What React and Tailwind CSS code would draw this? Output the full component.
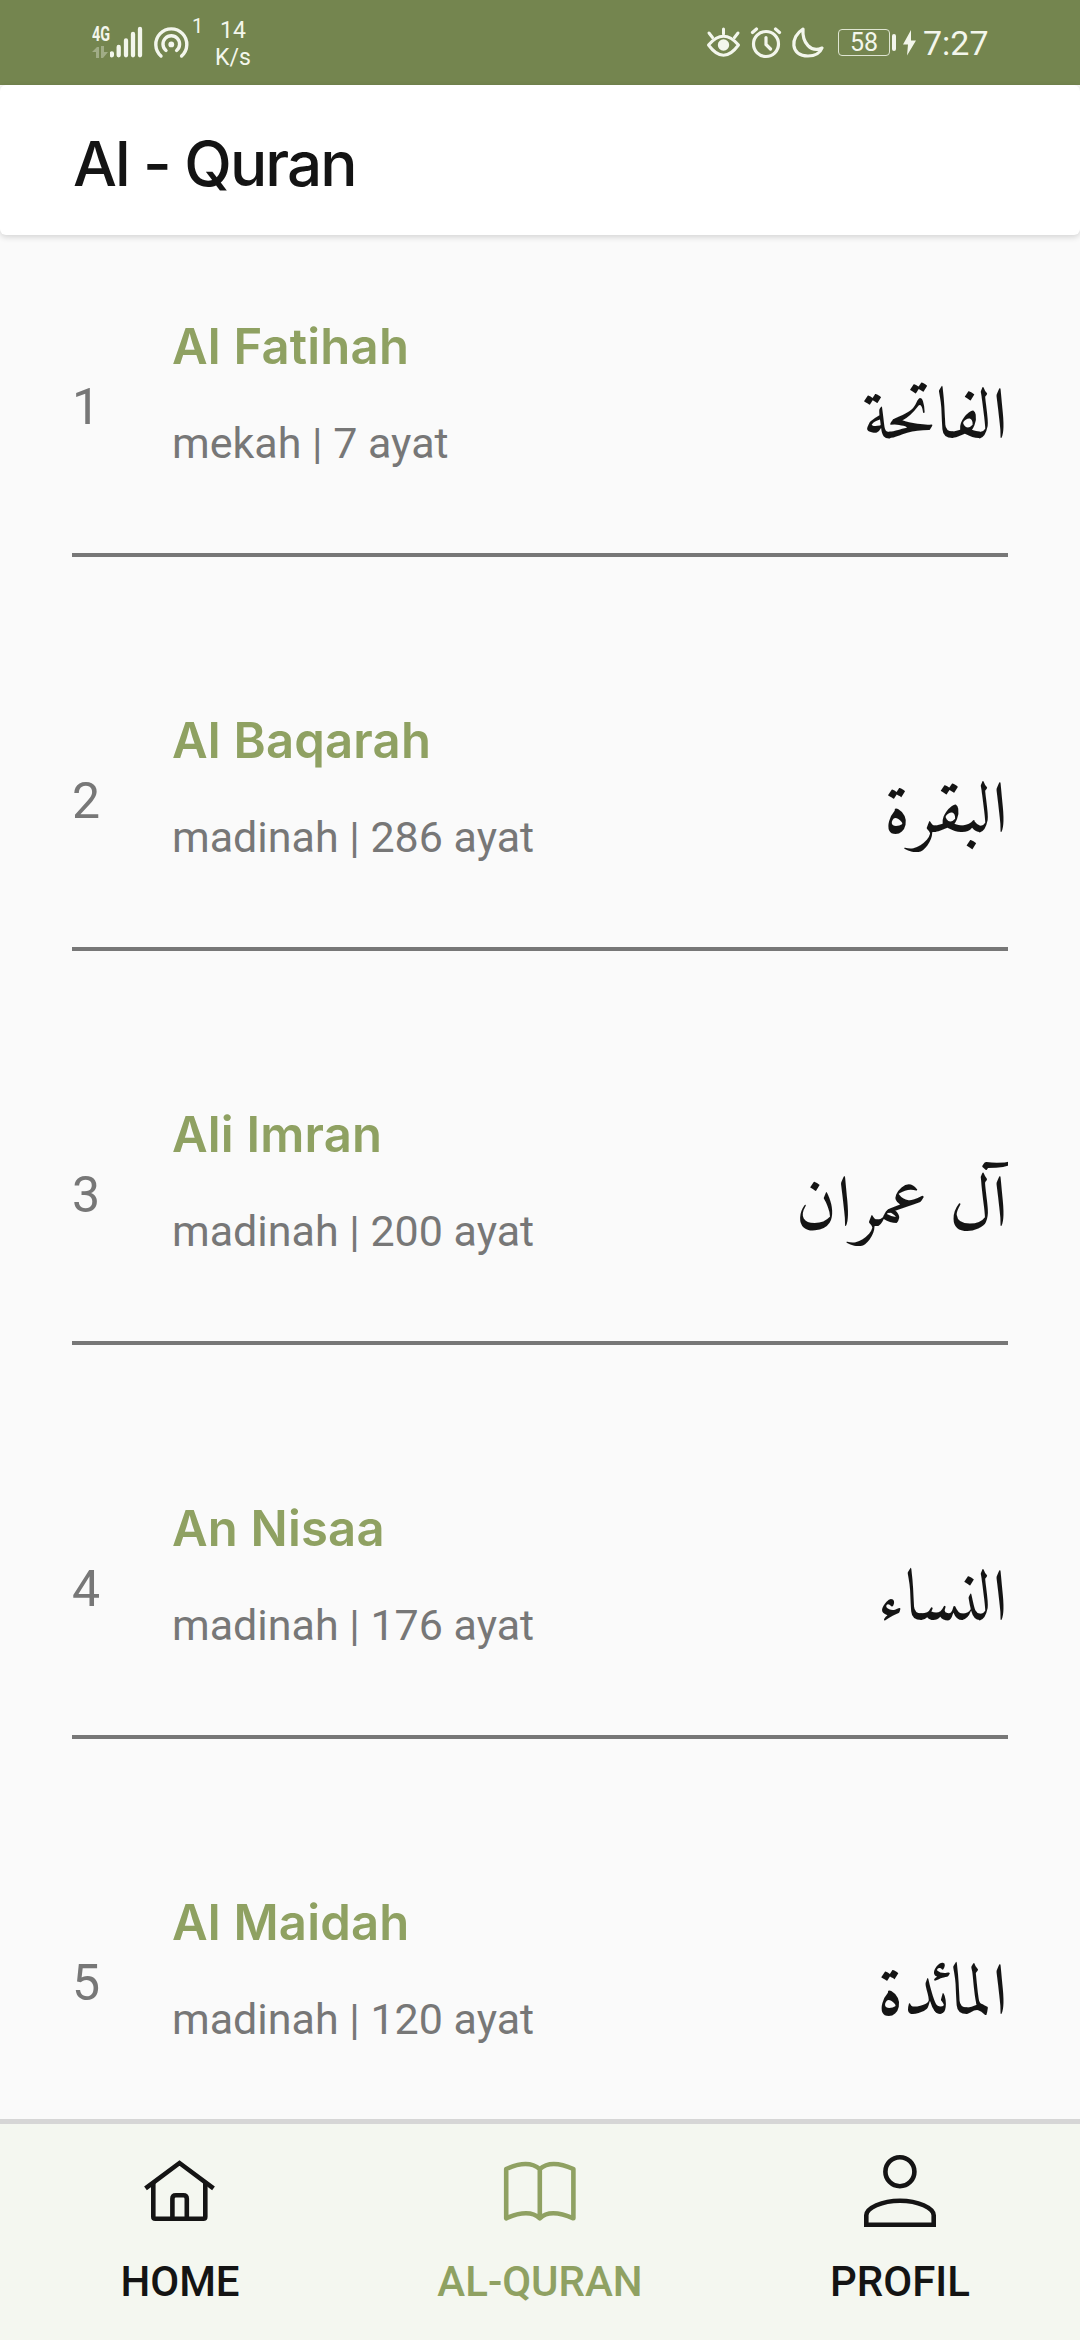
import React from "react";

const surahs = [
  { n: 1, name: "Al Fatihah", info: "mekah | 7 ayat", ar: "الفاتحة" },
  { n: 2, name: "Al Baqarah", info: "madinah | 286 ayat", ar: "البقرة" },
  { n: 3, name: "Ali Imran", info: "madinah | 200 ayat", ar: "آل عمران" },
  { n: 4, name: "An Nisaa", info: "madinah | 176 ayat", ar: "النساء" },
  { n: 5, name: "Al Maidah", info: "madinah | 120 ayat", ar: "المائدة" },
];

function StatusBar() {
  return (
    <div className="flex h-[85px] shrink-0 items-start bg-[#74854f] pl-[92px] text-[#f3f6ec]">
      <div className="flex w-[18px] flex-col pt-[24px]">
        <span className="w-[30px] origin-left scale-x-[0.72] text-[20px] font-bold leading-[20px]">4G</span>
        <svg className="mt-[2px] h-[12px] w-[16px] opacity-35" viewBox="0 0 16 12" fill="currentColor">
          <path d="M0 6 5 1h2v11H4V6zM9 0h3v6h4l-5 6H9z" />
        </svg>
      </div>
      <svg className="h-[85px] w-[34px]" viewBox="0 0 34 85" stroke="currentColor" strokeWidth="4.3" strokeLinecap="round">
        <path d="M1.9 53.5v1.8M8.7 47v8.3M16 40.5v14.8M23 34v21.3M30 29v26.3" />
      </svg>
      <svg className="ml-[9px] h-[85px] w-[36px]" viewBox="0 0 36 85" fill="none" stroke="currentColor" strokeWidth="3.4" strokeLinecap="round">
        <path d="M8 56A15.5 15.5 0 1 1 28.6 56M13 50.5A8.3 8.3 0 1 1 23.6 50.5" />
        <circle cx="18.3" cy="44.4" r="2.9" fill="currentColor" stroke="none" />
      </svg>
      <span className="ml-[3px] mt-[14px] w-[12px] text-[20px] leading-[24px]">1</span>
      <div className="ml-[8px] mt-[17px] flex w-[42px] flex-col items-center text-[23px] leading-[27px]">
        <span>14</span>
        <span>K/s</span>
      </div>
      <svg className="ml-[451px] h-[85px] w-[36px]" viewBox="0 0 36 85" fill="none" stroke="currentColor" strokeWidth="3" strokeLinecap="round">
        <path d="M3.5 45Q18.5 27.5 33.5 45Q18.5 65.5 3.5 45Z" strokeLinejoin="round" />
        <path d="M18.5 29v5M4 33l3.5 4.5M33 33l-3.5 4.5" />
        <circle cx="18.5" cy="45" r="5.7" fill="currentColor" stroke="none" />
      </svg>
      <svg className="ml-[8px] h-[85px] w-[34px]" viewBox="0 0 34 85" fill="none" stroke="currentColor" strokeWidth="3.2" strokeLinecap="round">
        <circle cx="17" cy="44" r="12.5" />
        <path d="M17 37.5v7l4.5 4.5M3.5 32.5 7.5 29M30.5 32.5 26.5 29" />
      </svg>
      <svg className="ml-[8px] h-[85px] w-[34px]" viewBox="0 0 34 85" fill="none" stroke="currentColor" strokeWidth="3.2" strokeLinejoin="round">
        <path d="M12 29C-1 37-1 56 17 56 24 56 29 53 31 48 20 53 11 43 12 29Z" />
      </svg>
      <div className="ml-[13px] mt-[29px] flex h-[27px] w-[52px] items-center justify-center rounded-[4px] border border-[#dfe5d2] text-[25px] leading-[25px]">58</div>
      <div className="ml-[2px] mt-[34px] h-[17px] w-[4px] rounded-[2px] bg-[#f3f6ec]" />
      <svg className="ml-[7px] mt-[30px] h-[26px] w-[13px]" viewBox="0 0 13 26" fill="currentColor">
        <path d="M8 0 0 14.5h5L4 25.5 13 10.5H8z" />
      </svg>
      <span className="ml-[7px] mt-[23px] text-[34px] leading-[40px]">7:27</span>
    </div>
  );
}

function HomeIcon() {
  return (
    <>
      <path d="M5.5 39.3 39.5 14 73.5 39.3" />
      <path d="M13.3 34v33.700q0 2 2 2h48q2 0 2-2V34M32.4 69.7V49.800q0-3.500 3.500-3.500h7.400q3.500 0 3.500 3.500v19.900" />
    </>
  );
}

function BookIcon() {
  return (
    <path
      strokeLinejoin="round"
      d="M6.2 20Q28 10 39.8 20Q51 10 73.4 20V69.3Q50 59.3 39.8 69.3Q29 59.3 6.2 69.3ZM39.8 20V69.3"
    />
  );
}

function PersonIcon() {
  return (
    <>
      <circle cx="39.9" cy="22.7" r="14.5" />
      <path d="M6.3 75.7V66.300C6.3 59 22 51.7 40 51.7S73.7 59 73.7 66.300V75.7Z" />
    </>
  );
}

const tabs = [
  { label: "HOME", Icon: HomeIcon, color: "text-[#141414]" },
  { label: "AL-QURAN", Icon: BookIcon, color: "text-[#8fa162]" },
  { label: "PROFIL", Icon: PersonIcon, color: "text-[#141414]" },
];

export default function App() {
  return (
    <div className="flex h-[2340px] w-[1080px] flex-col overflow-hidden bg-[#fafafa] font-['Roboto',sans-serif] text-[#141414]">
      <StatusBar />
      <header className="flex h-[150px] shrink-0 items-start rounded-[6px] bg-white pl-[73px] pt-[39px] shadow-[0_2px_6px_rgba(0,0,0,0.16)]">
        <h1 className="font-['Inter',sans-serif] text-[62px] font-medium leading-[80px] tracking-[-2px]">Al - Quran</h1>
      </header>
      <main className="flex min-h-0 flex-1 flex-col gap-[72px] overflow-hidden px-[72px]">
        {surahs.map((s) => (
          <article key={s.n} className="flex h-[322px] shrink-0 items-start overflow-x-clip border-b-[4px] border-[#777777]">
            <span className="mt-[142px] w-[100px] text-[50px] leading-[60px] text-[#777777]">{s.n}</span>
            <div className="flex flex-1 flex-col gap-[41px] pt-[82px]">
              <h2 className="font-['Inter',sans-serif] text-[49px] font-semibold leading-[60px] tracking-[0.2px] text-[#8fa162]">{s.name}</h2>
              <p className="text-[43px] leading-[50px] text-[#777777]">{s.info}</p>
            </div>
            <span dir="rtl" className="mt-[151px] font-['Amiri','Noto_Naskh_Arabic','DejaVu_Sans',serif] text-[72px] leading-[70px]">{s.ar}</span>
          </article>
        ))}
      </main>
      <nav className="grid h-[221px] shrink-0 grid-cols-3 border-t-[5px] border-[#d6d6d6] bg-[#f4f7f0]">
        {tabs.map(({ label, Icon, color }) => (
          <div key={label} className={"flex flex-col items-center pt-[25px] " + color}>
            <svg className="h-[80px] w-[80px]" viewBox="0 0 80 80" fill="none" stroke="currentColor" strokeWidth="4.6">
              <Icon />
            </svg>
            <span className="mt-[28px] text-[42px] font-medium leading-[50px]">{label}</span>
          </div>
        ))}
      </nav>
    </div>
  );
}
